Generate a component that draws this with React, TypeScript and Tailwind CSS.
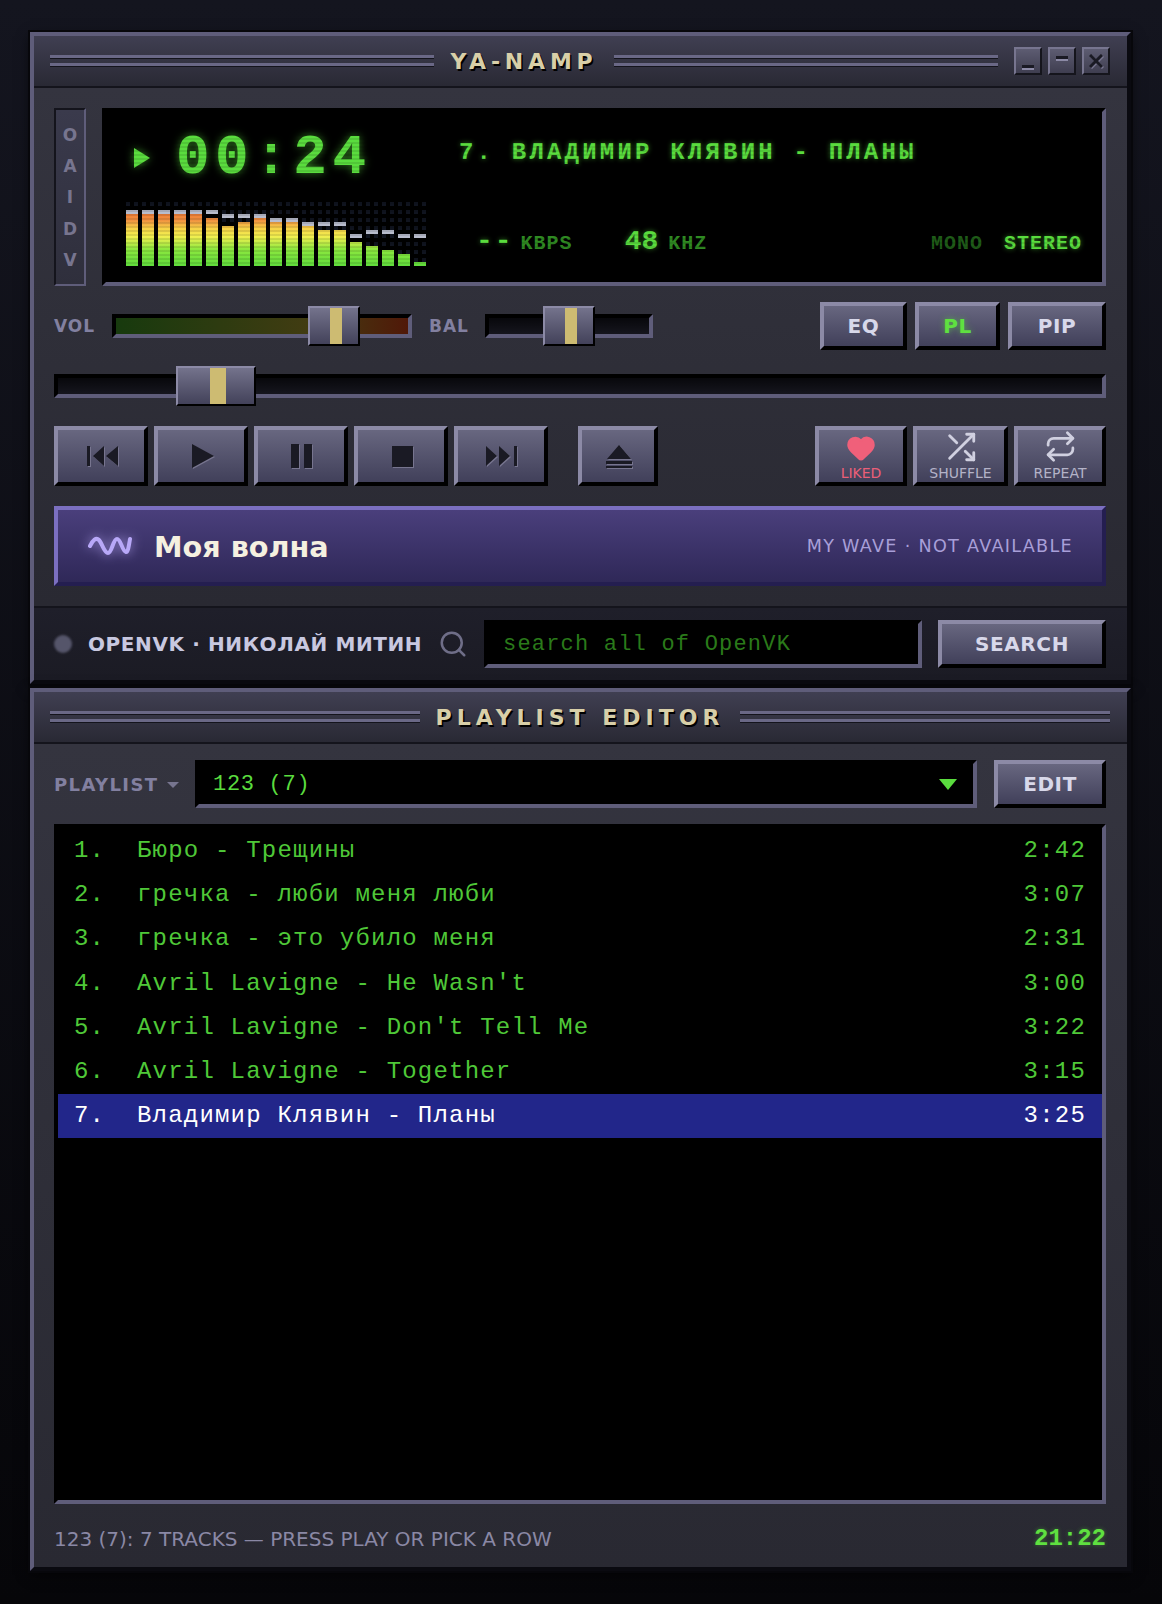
import type { ReactNode } from "react";
import { Heart, Repeat, Search } from "lucide-react";
import { FiShuffle } from "react-icons/fi";

const sans = "[font-family:'DejaVu_Sans',sans-serif]";
const mono = "[font-family:'Liberation_Mono',monospace]";
const raised =
  "border-4 border-t-[#8c8aa6] border-l-[#8c8aa6] border-r-black border-b-black bg-linear-to-b from-[#686780] to-[#41405a]";
const sunken = "border-4 border-t-black border-l-black border-r-[#5f5d7a] border-b-[#5f5d7a]";
const iconShadow = "drop-shadow-[1.5px_1.5px_0_#77758f]";
const glow = "text-[#5adc3e] [text-shadow:0_0_5px_rgba(90,220,60,0.55)]";
const windowFrame =
  "w-[1101px] border-4 border-t-[#5f5d7a] border-l-[#5f5d7a] border-r-[#0a0a10] border-b-[#0a0a10] shadow-[0_0_0_2px_#07070b,0_4px_12px_rgba(0,0,0,0.6)]";

// height of bar, bottom of peak (px from floor)
const bars = [
  [52, 56], [52, 56], [52, 56], [52, 56], [52, 56], [48, 56], [40, 52], [44, 52], [48, 52], [44, 48],
  [44, 48], [40, 44], [36, 44], [36, 44], [24, 32], [20, 36], [16, 36], [12, 32], [4, 32],
];

const tracks = [
  ["1.", "Бюро - Трещины", "2:42"],
  ["2.", "гречка - люби меня люби", "3:07"],
  ["3.", "гречка - это убило меня", "2:31"],
  ["4.", "Avril Lavigne - He Wasn't", "3:00"],
  ["5.", "Avril Lavigne - Don't Tell Me", "3:22"],
  ["6.", "Avril Lavigne - Together", "3:15"],
  ["7.", "Владимир Клявин - Планы", "3:25"],
];

function TitleLines() {
  return (
    <div className="flex h-3 flex-1 flex-col justify-between">
      <div className="h-1 border-b border-[#14141c] bg-[#6a6886]" />
      <div className="h-1 border-b border-[#14141c] bg-[#6a6886]" />
    </div>
  );
}

function TitleBar({ title, spacing, children }: { title: string; spacing: string; children?: ReactNode }) {
  return (
    <div className="flex h-[52px] items-center border-b-2 border-[#14141c] bg-linear-to-b from-[#403f52] to-[#292934] pr-[17px] pl-4">
      <TitleLines />
      <span
        className={`${sans} ${spacing} px-[16px] pt-[2px] text-[22px] leading-none font-bold text-[#d8cfa8] [text-shadow:1.5px_1.5px_0_#000]`}
      >
        {title}
      </span>
      <TitleLines />
      {children}
    </div>
  );
}

function WinButton({ children }: { children: ReactNode }) {
  return (
    <button className="flex size-7 items-center justify-center border-2 border-t-[#77758f] border-l-[#77758f] border-r-[#15151c] border-b-[#15151c] bg-linear-to-b from-[#5d5c72] to-[#3f3e50] text-[#1a1a24]">
      {children}
    </button>
  );
}

function Thumb({ left, width, bar }: { left: string; width: string; bar: string }) {
  return (
    <div
      className={`absolute -top-[12px] ${left} ${width} flex h-10 justify-center border-2 border-t-[#8c8aa6] border-l-[#8c8aa6] border-r-black border-b-black bg-linear-to-b from-[#74738c] to-[#43425a] pl-1`}
    >
      <div className={`h-full ${bar} bg-[#cdbb72]`} />
    </div>
  );
}

function TransportButton({ width, children }: { width: string; children: ReactNode }) {
  return (
    <button className={`${raised} flex h-[60px] ${width} items-center justify-center pl-1`}>{children}</button>
  );
}

function SmallButton({ width, green, children }: { width: string; green?: boolean; children: ReactNode }) {
  return (
    <button
      className={`${raised} ${sans} flex h-12 ${width} items-center justify-center text-[20px] font-bold tracking-[0.6px] ${
        green ? "text-[#5fe040] [text-shadow:0_0_6px_rgba(90,220,60,0.6)]" : "text-[#d8d8ea]"
      }`}
    >
      {children}
    </button>
  );
}

function ToggleButton({ width, label, pink, children }: { width: string; label: string; pink?: boolean; children: ReactNode }) {
  return (
    <button className={`${raised} flex h-[60px] ${width} flex-col items-center justify-start pt-[2px]`}>
      {children}
      <span className={`${sans} text-[14px] leading-none ${pink ? "text-[#ec5f78]" : "text-[#b4b3c8]"}`}>{label}</span>
    </button>
  );
}

function Display() {
  return (
    <div className={`${sunken} relative flex h-[178px] flex-1 bg-black pl-5`}>
      <div className="flex w-[300px] flex-col">
        <div className="mt-[21px] flex items-center">
          <svg width="16" height="20" viewBox="0 0 16 20" className="ml-[8px] drop-shadow-[0_0_4px_rgba(90,220,60,0.6)]">
            <path d="M0 0L16 10L0 20Z" fill="#5adc3e" />
          </svg>
          <span
            className={`${mono} ml-[26px] text-[56px] leading-[50px] font-bold tracking-[5.5px] text-[#5adc3e] [text-shadow:0_0_8px_rgba(90,220,60,0.6)]`}
          >
            00:24
          </span>
        </div>
        <div className="mt-auto mb-4 flex h-16 gap-1 bg-[#10141f] bg-[linear-gradient(90deg,transparent_50%,#000_50%),linear-gradient(180deg,transparent_50%,#000_50%)] bg-[length:8px_8px]">
          {bars.map(([h, peak], i) => (
            <div key={i} className="flex w-3 flex-col justify-end">
              <div className="h-1 bg-[#b8bccc]" style={{ marginBottom: peak - 4 - h }} />
              <div
                className="bg-[linear-gradient(to_top,#60dc3c_0%,#8ee83f_30%,#f0f050_52%,#f8d048_68%,#f09040_82%,#f08038_92%)] bg-[length:100%_56px] bg-bottom"
                style={{ height: h }}
              />
            </div>
          ))}
        </div>
      </div>
      <div className={`${mono} ml-[33px] flex flex-1 flex-col pr-[20px]`}>
        <div className={`${glow} mt-[27px] text-[24px] leading-[28px] font-bold tracking-[3.2px] whitespace-nowrap`}>
          7. ВЛАДИМИР КЛЯВИН - ПЛАНЫ
        </div>
        <div className="mt-auto mb-[26px] flex items-baseline text-[20px] leading-none font-bold">
          <span className={`${glow} ml-[17px] text-[28px] tracking-[2px]`}>--</span>
          <span className="ml-[7px] tracking-[1px] text-[#2f8a22]">KBPS</span>
          <span className={`${glow} ml-[52px] text-[28px]`}>48</span>
          <span className="ml-[10px] tracking-[1px] text-[#2f8a22]">KHZ</span>
          <span className="ml-auto tracking-[1px] text-[#1f5c18]">MONO</span>
          <span className={`${glow} ml-[21px] tracking-[1px]`}>STEREO</span>
        </div>
      </div>
      <div className="pointer-events-none absolute inset-0 bg-[repeating-linear-gradient(to_bottom,transparent_0_2px,rgba(0,0,0,0.1)_2px_4px)]" />
    </div>
  );
}

function MainWindow() {
  return (
    <section className={`${windowFrame} h-[652px]`}>
      <TitleBar title="YA-NAMP" spacing="tracking-[4.8px]">
        <div className="ml-4 flex gap-[6px]">
          <WinButton>
            <span className="mt-[10px] h-[3px] w-3 bg-[#1a1a24] shadow-[0_2px_0_#8c8aa6]" />
          </WinButton>
          <WinButton>
            <span className="mb-[8px] h-[3px] w-3 bg-[#1a1a24] shadow-[0_2px_0_#8c8aa6]" />
          </WinButton>
          <WinButton>
            <svg width="14" height="14" viewBox="0 0 14 14" className={iconShadow}>
              <path d="M1 1L13 13M13 1L1 13" stroke="#1a1a24" strokeWidth="3" />
            </svg>
          </WinButton>
        </div>
      </TitleBar>
      <div className="flex h-[518px] flex-col bg-linear-to-b from-[#34343f] to-[#292932] pt-5 pr-[21px] pl-5">
        <div className="flex gap-4">
          <div
            className={`${sans} flex h-[178px] w-8 flex-col items-center justify-around border-2 border-t-[#14141c] border-l-[#14141c] border-r-[#5f5d7a] border-b-[#5f5d7a] bg-linear-to-b from-[#3a3a4c] to-[#2f2f3c] pt-[10px] pb-[8px] text-[17px] leading-none font-bold text-[#77758f]`}
          >
            {"OAIDV".split("").map((c) => (
              <span key={c}>{c}</span>
            ))}
          </div>
          <Display />
        </div>

        <div className="mt-4 flex h-12 items-center">
          <span className={`${sans} w-[58px] pt-[1px] text-[17px] font-bold tracking-[1px] text-[#8280a0]`}>VOL</span>
          <div className={`${sunken} relative h-6 w-[300px] bg-[linear-gradient(90deg,#173a0e,#443c12_70%,#501808)]`}>
            <Thumb left="left-[192px]" width="w-[52px]" bar="w-3" />
          </div>
          <span className={`${sans} ml-[17px] w-[56px] pt-[1px] text-[17px] font-bold tracking-[1px] text-[#8280a0]`}>BAL</span>
          <div className={`${sunken} relative h-6 w-[168px] bg-linear-to-b from-[#08080c] to-[#16161e]`}>
            <Thumb left="left-[54px]" width="w-[52px]" bar="w-3" />
          </div>
          <div className="ml-auto flex gap-2">
            <SmallButton width="w-[87px]">EQ</SmallButton>
            <SmallButton width="w-[85px]" green>
              PL
            </SmallButton>
            <SmallButton width="w-[98px]">PIP</SmallButton>
          </div>
        </div>

        <div className="mt-4 flex h-10 items-center">
          <div className={`${sunken} relative h-6 w-full bg-linear-to-b from-[#08080c] to-[#16161e]`}>
            <Thumb left="left-[118px]" width="w-20" bar="w-4" />
          </div>
        </div>

        <div className="mt-5 flex gap-[6px]">
          <TransportButton width="w-[94px]">
            <svg width="32" height="22" viewBox="0 0 32 22" className={iconShadow} fill="#1a1a24">
              <path d="M0 1h3v20H0zM17 1v20L6 11zM31 1v20L19 11z" />
            </svg>
          </TransportButton>
          <TransportButton width="w-[94px]">
            <svg width="22" height="24" viewBox="0 0 22 24" className={iconShadow} fill="#1a1a24">
              <path d="M0 0L22 12L0 24Z" />
            </svg>
          </TransportButton>
          <TransportButton width="w-[94px]">
            <svg width="22" height="24" viewBox="0 0 22 24" className={`${iconShadow} -ml-[2px]`} fill="#1a1a24">
              <path d="M0 0h8v24H0zM13 0h8v24h-8z" />
            </svg>
          </TransportButton>
          <TransportButton width="w-[94px]">
            <svg width="21" height="21" viewBox="0 0 21 21" className={`${iconShadow} -ml-[2px]`} fill="#1a1a24">
              <path d="M0 0h21v21H0z" />
            </svg>
          </TransportButton>
          <TransportButton width="w-[94px]">
            <svg width="33" height="22" viewBox="0 0 33 22" className={`${iconShadow} -ml-1`} fill="#1a1a24">
              <path d="M1 1v20l11-10zM14 1v20l11-10zM29 1h3v20h-3z" />
            </svg>
          </TransportButton>
          <div className="ml-[24px]">
            <TransportButton width="w-20">
              <svg width="26" height="23" viewBox="0 0 26 23" className={`${iconShadow} -ml-[2px]`} fill="#1a1a24">
                <path d="M13 0L25 14H1zM0 16h26v3H0zM0 21h26v2H0z" />
              </svg>
            </TransportButton>
          </div>
          <div className="ml-auto flex gap-[6px]">
            <ToggleButton width="w-[92px]" label="LIKED" pink>
              <Heart size={30} fill="#f0607a" stroke="#f0607a" className="mt-[1px] mb-[3px]" />
            </ToggleButton>
            <ToggleButton width="w-[95px]" label="SHUFFLE">
              <FiShuffle size={34} color="#d0d0e0" className="-mt-[2px] mb-[2px]" />
            </ToggleButton>
            <ToggleButton width="w-[92px]" label="REPEAT">
              <Repeat size={33} color="#d0d0e0" className="-mt-[2px] mb-[3px]" />
            </ToggleButton>
          </div>
        </div>

        <button className="mt-5 flex h-20 items-center border-4 border-t-[#7b6fc0] border-l-[#7b6fc0] border-r-[#241e50] border-b-[#241e50] bg-linear-to-b from-[#4a3f7c] to-[#2f2858] pr-[29px] pl-[30px]">
          <svg width="44" height="20" viewBox="0 0 44 20" className="drop-shadow-[0_0_6px_rgba(184,168,248,0.8)]" fill="none" stroke="#b8a8f8" strokeWidth="4" strokeLinecap="round" strokeLinejoin="round">
            <path d="M2 10C5 4 8 1 11 4C14 7 16 17 20 17C24 17 25 3 29 3C33 3 34 15 38 16C40 16.5 41 9 42 3" />
          </svg>
          <span className={`${sans} ml-[22px] pt-[2px] text-[28.7px] leading-none font-bold text-[#f5f0e0]`}>Моя волна</span>
          <span className={`${sans} ml-auto pt-[1px] text-[17.6px] tracking-[1.3px] text-[#a89fd8]`}>MY WAVE · NOT AVAILABLE</span>
        </button>
      </div>
      <div className="flex h-[74px] items-center border-t-2 border-[#14141c] bg-linear-to-b from-[#1f1f2a] to-[#1b1b24] pr-[21px] pl-5">
        <span className="size-[18px] shrink-0 rounded-full bg-[#55556a] blur-[1px]" />
        <span className={`${sans} ml-4 w-[334px] text-[20px] font-bold tracking-[0.6px] whitespace-nowrap text-[#c8c8e0]`}>OPENVK · НИКОЛАЙ МИТИН</span>
        <Search size={30} color="#6f6e88" className="ml-4 shrink-0" />
        <div className={`${sunken} ${mono} ml-4 flex h-12 w-[438px] items-center bg-black pl-[15px] text-[22px] tracking-[1.2px] text-[#2a7a1a]`}>
          search all of OpenVK
        </div>
        <div className="ml-auto">
          <SmallButton width="w-[168px]">SEARCH</SmallButton>
        </div>
      </div>
    </section>
  );
}

function PlaylistWindow() {
  return (
    <section className={`${windowFrame} mt-1 h-[883px]`}>
      <TitleBar title="PLAYLIST EDITOR" spacing="tracking-[5px]" />
      <div className="flex h-[823px] flex-col bg-linear-to-b from-[#34343f] to-[#292932] pt-4 pr-[21px] pl-5">
        <div className="flex items-center">
          <span className={`${sans} flex w-[141px] items-center pt-[1px] text-[18px] font-bold tracking-[1.4px] whitespace-nowrap text-[#8280a0]`}>
            PLAYLIST
            <svg width="12" height="6" viewBox="0 0 12 6" className="ml-[8px]">
              <path d="M0 0h12L6 6z" fill="#77758f" />
            </svg>
          </span>
          <div className={`${sunken} ${mono} flex h-12 w-[782px] items-center bg-black pr-[16px] pl-[14px] text-[22px] tracking-[0.7px] text-[#5adc3e]`}>
            <span>123 (7)</span>
            <svg width="18" height="11" viewBox="0 0 18 11" className="ml-auto">
              <path d="M0 0h18L9 11z" fill="#5adc3e" />
            </svg>
          </div>
          <div className="ml-auto">
            <SmallButton width="w-[112px]">EDIT</SmallButton>
          </div>
        </div>
        <div className={`${sunken} ${mono} mt-4 flex h-[680px] flex-col bg-black text-[24px] tracking-[1.2px]`}>
          {tracks.map(([num, name, time], i) => (
            <div
              key={num}
              className={`flex h-[44.3px] shrink-0 items-center pt-[1px] pr-4 pl-4 ${i === 6 ? "bg-[#22268a] text-white" : "text-[#4fc838]"}`}
            >
              <span className="w-[63px]">{num}</span>
              <span>{name}</span>
              <span className="ml-auto">{time}</span>
            </div>
          ))}
        </div>
        <div className="mt-[17px] flex items-center justify-between">
          <span className={`${sans} text-[20px] text-[#8a88a5]`}>123 (7): 7 TRACKS — PRESS PLAY OR PICK A ROW</span>
          <span className={`${mono} text-[24px] font-bold text-[#5fe040] [text-shadow:0_0_4px_rgba(90,220,60,0.4)]`}>21:22</span>
        </div>
      </div>
    </section>
  );
}

export default function App() {
  return (
    <div className="h-[1604px] w-[1162px] overflow-hidden bg-linear-to-b from-[#14151f] to-[#060609] pt-8 pl-[30px]">
      <MainWindow />
      <PlaylistWindow />
    </div>
  );
}
